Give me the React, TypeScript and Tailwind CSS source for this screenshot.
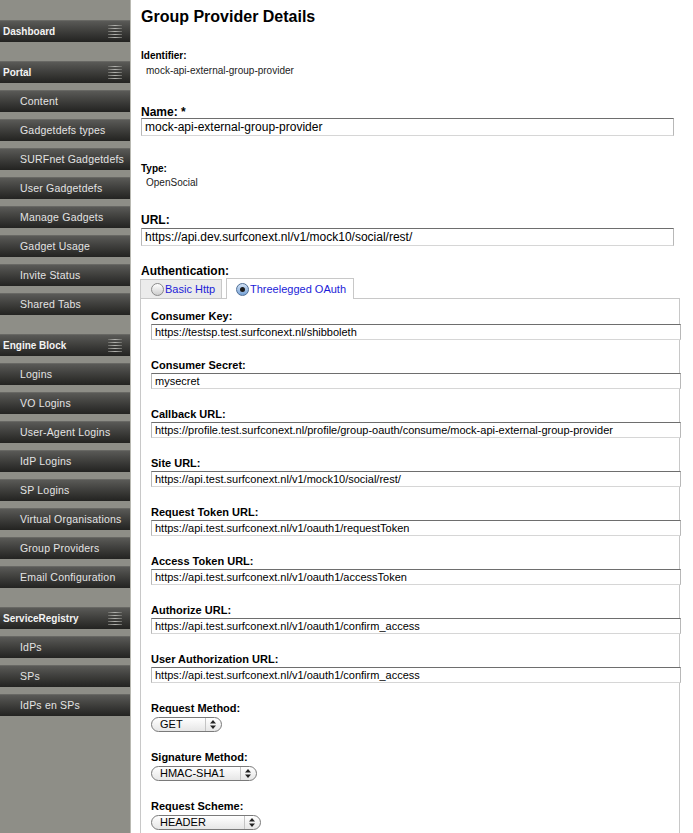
import React from "react";

const groups: { title: string; items: string[] }[] = [
  { title: "Dashboard", items: [] },
  {
    title: "Portal",
    items: [
      "Content",
      "Gadgetdefs types",
      "SURFnet Gadgetdefs",
      "User Gadgetdefs",
      "Manage Gadgets",
      "Gadget Usage",
      "Invite Status",
      "Shared Tabs",
    ],
  },
  {
    title: "Engine Block",
    items: [
      "Logins",
      "VO Logins",
      "User-Agent Logins",
      "IdP Logins",
      "SP Logins",
      "Virtual Organisations",
      "Group Providers",
      "Email Configuration",
    ],
  },
  { title: "ServiceRegistry", items: ["IdPs", "SPs", "IdPs en SPs"] },
];

const fields: { label: string; value: string }[] = [
  { label: "Consumer Key:", value: "https://testsp.test.surfconext.nl/shibboleth" },
  { label: "Consumer Secret:", value: "mysecret" },
  {
    label: "Callback URL:",
    value:
      "https://profile.test.surfconext.nl/profile/group-oauth/consume/mock-api-external-group-provider",
  },
  { label: "Site URL:", value: "https://api.test.surfconext.nl/v1/mock10/social/rest/" },
  { label: "Request Token URL:", value: "https://api.test.surfconext.nl/v1/oauth1/requestToken" },
  { label: "Access Token URL:", value: "https://api.test.surfconext.nl/v1/oauth1/accessToken" },
  { label: "Authorize URL:", value: "https://api.test.surfconext.nl/v1/oauth1/confirm_access" },
  {
    label: "User Authorization URL:",
    value: "https://api.test.surfconext.nl/v1/oauth1/confirm_access",
  },
];

function Grip() {
  return (
    <div className="flex w-[14px] flex-col gap-[2px]">
      {[0, 1, 2, 3, 4].map((i) => (
        <div
          key={i}
          className="h-px bg-gradient-to-r from-[#6a6a66] via-[#b4b4b0] to-[#6a6a66]"
        />
      ))}
    </div>
  );
}

function Arrows() {
  return (
    <svg width="6" height="9" viewBox="0 0 6 9" className="shrink-0">
      <polygon points="0,3.5 3,0 6,3.5" fill="#222" />
      <polygon points="0,5.5 3,9 6,5.5" fill="#222" />
    </svg>
  );
}

function Select({ value, w }: { value: string; w: string }) {
  return (
    <div
      className={`mt-[2px] flex h-[15px] items-center justify-between rounded-full border border-[#7a7a7a] bg-gradient-to-b from-white to-[#e6e6e6] pl-[8px] pr-[5px] text-[11px] leading-none text-black ${w}`}
    >
      <span>{value}</span>
      <div className="flex h-full items-center border-l border-[#c4c4c4] pl-[4px]">
        <Arrows />
      </div>
    </div>
  );
}

function Field({ label, value }: { label: string; value: string }) {
  return (
    <div className="mb-[19px]">
      <div className="text-[11px] font-bold leading-[13px] text-black">{label}</div>
      <input
        readOnly
        value={value}
        className="mt-[1px] block h-[16px] w-[530px] border border-t-[#6e6e6e] border-r-[#b8b8b8] border-b-[#d6d6d6] border-l-[#b8b8b8] bg-white px-[3px] text-[11px] leading-none text-black outline-none"
      />
    </div>
  );
}

export default function App() {
  return (
    <div className="flex h-[833px] w-full overflow-hidden bg-white font-['Liberation_Sans',Arial,sans-serif]">
      {/* Sidebar */}
      <div className="h-full w-[131px] shrink-0 border-r border-[#b9b9b2] bg-[#8e8e87] bg-[image:radial-gradient(circle,#a2a29b_0.5px,transparent_0.7px)] bg-[length:6px_6px]">
        {groups.map((g, gi) => (
          <div key={g.title}>
            <div
              className={`${gi === 0 ? "mt-[20px]" : "mt-[19px]"} flex h-[22px] items-center justify-between border-t border-[#686864] bg-gradient-to-b from-[#5a5a57] to-[#232321] pl-[3px] pr-[8px] text-[10px] font-bold text-[#f3f3f3]`}
            >
              <span>{g.title}</span>
              <Grip />
            </div>
            {g.items.map((it) => (
              <div
                key={it}
                className="mt-[7px] flex h-[22px] items-center border-t border-[#686864] bg-gradient-to-b from-[#5a5a57] to-[#232321] pl-[20px] text-[10.5px] tracking-[0.2px] text-[#e4e4e4]"
              >
                {it}
              </div>
            ))}
          </div>
        ))}
      </div>

      {/* Content */}
      <div className="flex-1 pl-[10px] pt-[7px] text-black">
        <h1 className="text-[16px] font-bold leading-[20px]">Group Provider Details</h1>

        <div className="mt-[23px] text-[10px] font-bold leading-[12px]">Identifier:</div>
        <div className="mt-[3px] pl-[5px] text-[10px] leading-[12px] text-[#222]">
          mock-api-external-group-provider
        </div>

        <div className="mt-[29px] text-[12px] font-bold leading-[13px]">Name: *</div>
        <input
          readOnly
          value="mock-api-external-group-provider"
          className="-mt-[1px] block h-[18px] w-[533px] border border-t-[#6e6e6e] border-r-[#b8b8b8] border-b-[#d6d6d6] border-l-[#b8b8b8] bg-white px-[3px] text-[12px] leading-none text-black outline-none"
        />

        <div className="mt-[27px] text-[10px] font-bold leading-[12px]">Type:</div>
        <div className="mt-[2px] pl-[5px] text-[10px] leading-[12px] text-[#222]">OpenSocial</div>

        <div className="mt-[25px] text-[12px] font-bold leading-[13px]">URL:</div>
        <input
          readOnly
          value="https://api.dev.surfconext.nl/v1/mock10/social/rest/"
          className="mt-[1px] block h-[18px] w-[533px] border border-t-[#6e6e6e] border-r-[#b8b8b8] border-b-[#d6d6d6] border-l-[#b8b8b8] bg-white px-[3px] text-[12px] leading-none text-black outline-none"
        />

        <div className="mt-[19px] text-[12px] font-bold leading-[13px]">Authentication:</div>

        {/* Tabs */}
        <div className="-ml-[1px] mt-[1px] w-[540px]">
          <div className="flex h-[19px] items-end gap-[4px]">
            <div className="flex h-[19px] w-[82px] items-center border border-b-0 border-[#c8c8c8] bg-[#ebebeb] pl-[10px] text-[11px] text-[#1c1cd8]">
              <span className="inline-block h-[13px] w-[13px] shrink-0 rounded-full border border-[#8a8a8a] bg-gradient-to-b from-white to-[#cdcdcd]" />
              <span className="ml-[1px]">Basic Http</span>
            </div>
            <div className="relative z-10 -mb-[1px] flex h-[21px] w-[128px] items-center border border-b-0 border-[#c8c8c8] bg-white pl-[9px] text-[11px] text-[#1c1cd8]">
              <span className="flex h-[13px] w-[13px] shrink-0 items-center justify-center rounded-full border border-[#4f6f97] bg-gradient-to-b from-[#d4e3f5] to-[#76a2d6]">
                <span className="h-[5px] w-[5px] rounded-full bg-[#1c1c1c]" />
              </span>
              <span className="ml-[1px]">Threelegged OAuth</span>
            </div>
          </div>
          <div className="min-h-[600px] border border-b-0 border-[#c8c8c8] pl-[10px] pt-[11px]">
            {fields.map((f) => (
              <Field key={f.label} label={f.label} value={f.value} />
            ))}
            <div className="mb-[19px]">
              <div className="text-[11px] font-bold leading-[13px]">Request Method:</div>
              <Select value="GET" w="w-[71px]" />
            </div>
            <div className="mb-[19px]">
              <div className="text-[11px] font-bold leading-[13px]">Signature Method:</div>
              <Select value="HMAC-SHA1" w="w-[106px]" />
            </div>
            <div className="mb-[19px]">
              <div className="text-[11px] font-bold leading-[13px]">Request Scheme:</div>
              <Select value="HEADER" w="w-[110px]" />
            </div>
          </div>
        </div>
      </div>
    </div>
  );
}
